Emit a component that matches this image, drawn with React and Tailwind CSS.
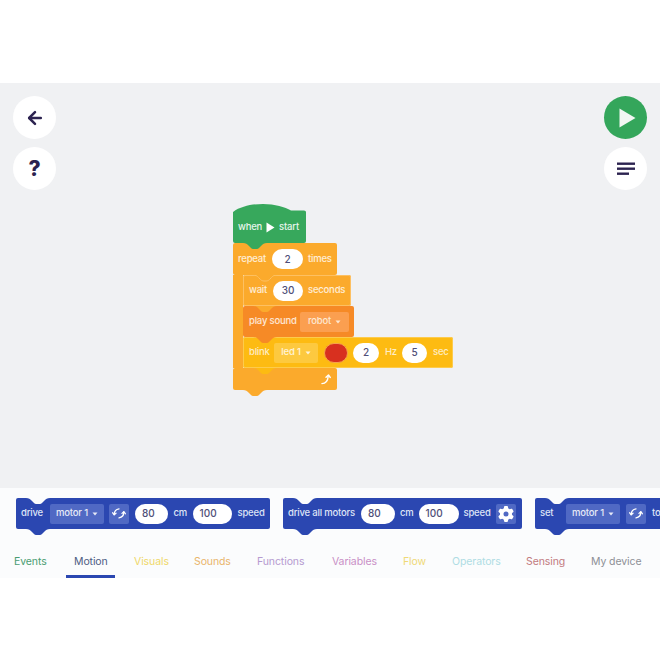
import { ArrowLeft } from 'lucide-react'
import { FaGear } from 'react-icons/fa6'

const tabs = [
  { label: 'Events', color: 'text-[#4a9d72]', width: 'w-[33px]' },
  { label: 'Motion', color: 'text-[#4c5b82]', width: 'w-[33px]', active: true },
  { label: 'Visuals', color: 'text-[#efd86a]', width: 'w-[33px]' },
  { label: 'Sounds', color: 'text-[#e9b56c]', width: 'w-[36px]' },
  { label: 'Functions', color: 'text-[#b59ad0]', width: 'w-[48px]' },
  { label: 'Variables', color: 'text-[#c98fc6]', width: 'w-[44px]' },
  { label: 'Flow', color: 'text-[#efd976]', width: 'w-[22px]' },
  { label: 'Operators', color: 'text-[#afdde4]', width: 'w-[47px]' },
  { label: 'Sensing', color: 'text-[#c27a80]', width: 'w-[38px]' },
  { label: 'My device', color: 'text-[#8d8f96]', width: 'w-[47px]' },
]

const tabPath = 'M0 0 C3 0 4 1 5.500 2.500 L7.500 4.500 C8.500 5.500 9.500 6 11 6 H13 C14.500 6 15.500 5.500 16.500 4.500 L18.500 2.500 C20 1 21 0 24 0'

function Tab({ fill, stroke, className }) {
  return (
    <svg width="24" height="7" viewBox="0 0 24 7" className={`absolute ${className}`}>
      <path d={`${tabPath} Z`} fill={fill} />
      {stroke && <path d={tabPath} fill="none" stroke={stroke} />}
    </svg>
  )
}

function Pill({ children, className = 'w-[30px]' }) {
  return (
    <span className={`flex h-[20px] shrink-0 items-center justify-center rounded-full bg-white text-[10px] font-medium tracking-normal text-[#4f4f78] ${className}`}>
      {children}
    </span>
  )
}

function ValuePill({ children, className }) {
  return (
    <span className={`flex h-[20px] shrink-0 items-center rounded-full bg-white pl-[7px] text-[10px] font-medium tracking-normal text-[#4f4f78] ${className}`}>
      {children}
    </span>
  )
}

function Caret() {
  return (
    <svg width="6" height="4" viewBox="0 0 6 4" className="ml-[4px]">
      <path d="M0.500 0.500 H5.500 L3 3.500 Z" fill="currentColor" />
    </svg>
  )
}

function RotateIcon() {
  return (
    <svg width="14" height="13" viewBox="0 0 14 13" fill="none" stroke="white" strokeWidth="1.300" strokeLinecap="round" strokeLinejoin="round">
      <path d="M2.200 7.500 C2.300 4.500 4 2.200 7 1.800" />
      <path d="M0.700 5.800 L2.200 7.800 L4 6.200" />
      <path d="M11.800 5 C11.800 8 10 10.400 7 10.800" />
      <path d="M10 6.400 L11.800 4.700 L13.300 6.700" />
    </svg>
  )
}

function MotorSelect() {
  return (
    <span className="flex h-[20px] w-[54px] shrink-0 items-center justify-center rounded-[2px] bg-[#5069c4] text-[#e6e9f7]">
      motor 1<Caret />
    </span>
  )
}

function RotateButton() {
  return (
    <span className="flex h-[20px] w-[20px] shrink-0 items-center justify-center rounded-[2px] bg-[#5069c4]">
      <RotateIcon />
    </span>
  )
}

function Palette({ className, children }) {
  return (
    <div className={`relative flex h-[31px] shrink-0 items-center whitespace-nowrap rounded-[2px] bg-[#2b47b1] pl-[5px] text-[9.500px] font-medium tracking-[-0.2px] text-[#dfe4f6] ${className}`}>
      <Tab fill="#fbfcfd" className="left-[10px] top-0" />
      <Tab fill="#2b47b1" className="left-[10px] top-full" />
      {children}
    </div>
  )
}

function Block({ className, children, tab, top, topStroke }) {
  return (
    <div className={`relative flex items-center whitespace-nowrap rounded-[2px] text-[9.500px] font-medium tracking-[-0.2px] ${className}`}>
      {top && <Tab fill={top} stroke={topStroke} className="left-[10px] top-0" />}
      {tab && <Tab fill={tab} className="left-[10px] top-full z-10" />}
      {children}
    </div>
  )
}

function ProgramBlocks() {
  return (
    <div className="absolute left-[233px] top-[121px] w-[220px]">
      {/* hat */}
      <svg width="73" height="8" viewBox="0 0 73 8" className="block">
        <path d="M0 8 C8 2 20 0 30 0 C42 0 52 3 58 6.500 L71 6.500 Q73 6.500 73 8 Z" fill="#37a85c" />
      </svg>
      <Block className="z-20 h-[31px] w-[73px] rounded-t-none bg-[#37a85c] pl-[5px] text-[#e6f5ea]" tab="#37a85c">
        when
        <svg width="9" height="11" viewBox="0 0 9 11" className="mx-[4px]"><path d="M0.500 0.500 L8.500 5.500 L0.500 10.500 Z" fill="white" /></svg>
        start
      </Block>

      {/* repeat */}
      <Block className="h-[32px] w-[104px] bg-[#fbaa2c] pl-[5px] text-white/80">
        <span className="w-[29px]">repeat</span>
        <Pill className="ml-[5px] mr-[5px] w-[31px]">2</Pill>
        times
      </Block>
      <div className="flex w-fit">
        <div className="w-[10px] bg-[#fbaa2c]" />
        <div>
          <Block className="z-30 h-[31px] w-[108px] bg-[#fbaa2c] pl-[6px] text-white/80 outline outline-[#fdc062] -outline-offset-1" top="#fbaa2c" topStroke="#fdc062" tab="#fbaa2c">
            <span className="w-[18px]">wait</span>
            <Pill className="ml-[6px] mr-[5px] w-[30px]">30</Pill>
            seconds
          </Block>
          <Block className="z-20 h-[31px] w-[111px] bg-[#f68a26] pl-[6px] text-white/80" tab="#f68a26">
            <span className="w-[51px]">play sound</span>
            <span className="flex h-[20px] w-[49px] items-center justify-center rounded-[2px] bg-[#fb9f50] text-[#fde8d2]">robot<Caret /></span>
          </Block>
          <Block className="z-10 h-[31px] w-[210px] bg-[#fdbb12] pl-[6px] text-white/75 outline outline-[#fdcb4c] -outline-offset-1" tab="#fdbb12">
            <span className="w-[25px]">blink</span>
            <span className="flex h-[20px] w-[44px] items-center justify-center rounded-[2px] bg-[#fdc93f] text-white/80">led 1<Caret /></span>
            <span className="ml-[6px] h-[20px] w-[24px] shrink-0 rounded-full border border-[#f5a24a] bg-[#d8301f]" />
            <Pill className="ml-[5px] w-[26px]">2</Pill>
            <span className="ml-[6px] mr-[5px]">Hz</span>
            <Pill className="w-[25px]">5</Pill>
            <span className="ml-[6px]">sec</span>
          </Block>
        </div>
      </div>
      <Block className="h-[22px] w-[104px] justify-end bg-[#fbaa2c] pr-[6px]" tab="#fbaa2c">
        <svg width="10" height="11" viewBox="0 0 11 12" fill="none" stroke="white" strokeWidth="1.500" strokeLinecap="round" strokeLinejoin="round">
          <path d="M1 10.500 C5 10.500 7.500 8 8 2" />
          <path d="M5.500 3.500 L8.200 1 L10.200 3.800" />
        </svg>
      </Block>
    </div>
  )
}

export default function App() {
  return (
    <div className="flex h-[660px] w-[660px] flex-col overflow-hidden bg-white font-['Inter',sans-serif]">
      <div className="h-[83px] shrink-0" />

      {/* canvas */}
      <div className="relative flex h-[405px] shrink-0 justify-between bg-[#f0f1f3] px-[13px] pt-[13px]">
        <div className="flex flex-col gap-[8px]">
          <button className="flex h-[43px] w-[43px] items-center justify-center rounded-full bg-white text-[#2c2350]">
            <ArrowLeft size={20} strokeWidth={3} />
          </button>
          <button className="flex h-[43px] w-[43px] items-center justify-center rounded-full bg-white text-[21px] font-extrabold text-[#2c2350]">
            ?
          </button>
        </div>
        <div className="flex flex-col gap-[8px]">
          <button className="flex h-[43px] w-[43px] items-center justify-center rounded-full bg-[#34a65b]">
            <svg width="17" height="20" viewBox="0 0 17 20" className="ml-[3px]"><path d="M0.500 0.500 L16.500 10 L0.500 19.500 Z" fill="#f2f7f3" /></svg>
          </button>
          <button className="flex h-[43px] w-[43px] items-center justify-center rounded-full bg-white">
            <svg width="18" height="14" viewBox="0 0 18 14" fill="#2c2350">
              <rect width="18" height="2.400" y="0.500" />
              <rect width="18" height="2.400" y="5.500" />
              <rect width="12" height="2.400" y="10.500" />
            </svg>
          </button>
        </div>
        <ProgramBlocks />
      </div>

      {/* palette */}
      <div className="flex h-[90px] shrink-0 flex-col justify-between overflow-hidden bg-[#fbfcfd]">
        <div className="flex gap-[13px] pl-[16px] pt-[10px]">
          <Palette className="w-[254px]">
            <span className="w-[29px]">drive</span>
            <MotorSelect />
            <span className="ml-[5px]"><RotateButton /></span>
            <ValuePill className="ml-[6px] w-[33px]">80</ValuePill>
            <span className="mx-[5.500px]">cm</span>
            <ValuePill className="w-[39px]">100</ValuePill>
            <span className="ml-[6px]">speed</span>
          </Palette>
          <Palette className="w-[239px]">
            <span className="w-[73px]">drive all motors</span>
            <ValuePill className="w-[34px]">80</ValuePill>
            <span className="mx-[5px]">cm</span>
            <ValuePill className="w-[40px]">100</ValuePill>
            <span className="mx-[5px]">speed</span>
            <span className="flex h-[20px] w-[20px] items-center justify-center rounded-[2px] bg-[#5069c4] text-white">
              <FaGear size={16} />
            </span>
          </Palette>
          <Palette className="w-[200px]">
            <span className="w-[26px]">set</span>
            <MotorSelect />
            <span className="mx-[6px]"><RotateButton /></span>
            to
          </Palette>
        </div>
        <div className="flex gap-[27px] whitespace-nowrap pl-[14px] text-[10.500px] tracking-[-0.1px]">
          {tabs.map((tab) => (
            <div key={tab.label} className={`relative pb-[8px] ${tab.width} ${tab.color}`}>
              {tab.label}
              {tab.active && <span className="absolute -left-[8px] -right-[8px] bottom-0 h-[3px] bg-[#2b47b1]" />}
            </div>
          ))}
        </div>
      </div>
    </div>
  )
}
